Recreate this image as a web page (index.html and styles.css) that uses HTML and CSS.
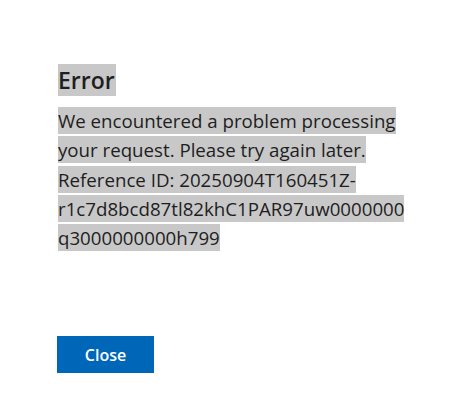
FILE: index.html
```html
<!DOCTYPE html>
<html lang="en">
<head>
<meta charset="utf-8">
<title>Error</title>
<link rel="stylesheet" href="styles.css">
</head>
<body>
<main class="page">
  <h1 class="title"><span class="hl">Error</span></h1>
  <p class="message"><span class="hl">We encountered a problem processing your request. Please try again later. Reference ID: 20250904T160451Z-r1c7d8bcd87tl82khC1PAR97uw0000000q3000000000h799</span></p>
  <div class="actions">
    <button class="btn" type="button">Close</button>
  </div>
</main>
</body>
</html>
```

FILE: styles.css
```css
html, body {
  margin: 0;
  padding: 0;
  background: #ffffff;
}

.page {
  padding: 64px 0 0 58px;
  width: 350px;
  font-family: "Open Sans", "Noto Sans", sans-serif;
  color: #1e1e1e;
}

.title {
  margin: 0;
  font-size: 23px;
  font-weight: 600;
  line-height: 32px;
}

.title .hl {
  display: inline-block;
  background: #c8c8c8;
  padding: 0 1px 0 0;
}

.message {
  margin: 10px 0 0 0;
  font-size: 18.7px;
  line-height: 29.3px;
  overflow-wrap: break-word;
}

.message .hl {
  background: #c8c8c8;
  padding: 1px 0;
}

.actions {
  margin-top: 84px;
}

.btn {
  width: 97px;
  height: 37px;
  margin-left: -1px;
  border: none;
  border-radius: 0;
  background: #0067b8;
  color: #ffffff;
  font-family: "Open Sans", "Noto Sans", sans-serif;
  font-size: 16px;
  font-weight: 600;
  cursor: pointer;
}
```
